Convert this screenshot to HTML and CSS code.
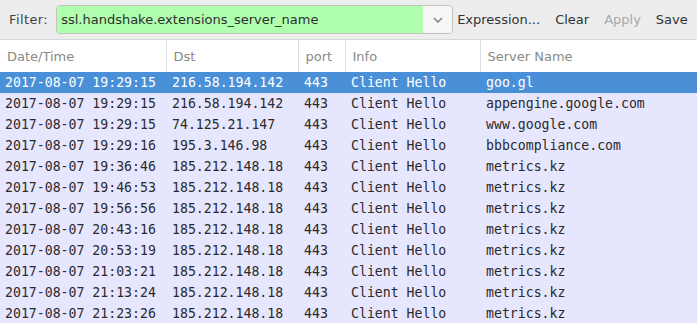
FILE: index.html
```html
<!DOCTYPE html>
<html lang="en">
<head>
  <meta charset="UTF-8" />
  <title>Packet List</title>
  <link rel="stylesheet" href="styles.css">
</head>
<body>

<div class="toolbar">
  <span class="filter-label">Filter:</span>
  <div class="filter-box">
    <div class="filter-input">ssl.handshake.extensions_server_name</div>
    <div class="filter-drop">
      <svg width="10" height="6" viewBox="0 0 10 6"><path d="M1 1 L5 5 L9 1" fill="none" stroke="#777" stroke-width="1.3"/></svg>
    </div>
  </div>
  <span class="tool-btn">Expression...</span>
  <span class="tool-btn">Clear</span>
  <span class="tool-btn disabled">Apply</span>
  <span class="tool-btn">Save</span>
</div>

<table class="packets">
  <colgroup>
    <col class="c-time">
    <col class="c-dst">
    <col class="c-port">
    <col class="c-info">
    <col>
  </colgroup>
  <thead>
    <tr>
      <th>Date/Time</th>
      <th>Dst</th>
      <th>port</th>
      <th>Info</th>
      <th>Server Name</th>
    </tr>
  </thead>
  <tbody>
    <tr class="selected"><td>2017-08-07 19:29:15</td><td>216.58.194.142</td><td>443</td><td>Client Hello</td><td>goo.gl</td></tr>
    <tr><td>2017-08-07 19:29:15</td><td>216.58.194.142</td><td>443</td><td>Client Hello</td><td>appengine.google.com</td></tr>
    <tr><td>2017-08-07 19:29:15</td><td>74.125.21.147</td><td>443</td><td>Client Hello</td><td>www.google.com</td></tr>
    <tr><td>2017-08-07 19:29:16</td><td>195.3.146.98</td><td>443</td><td>Client Hello</td><td>bbbcompliance.com</td></tr>
    <tr><td>2017-08-07 19:36:46</td><td>185.212.148.18</td><td>443</td><td>Client Hello</td><td>metrics.kz</td></tr>
    <tr><td>2017-08-07 19:46:53</td><td>185.212.148.18</td><td>443</td><td>Client Hello</td><td>metrics.kz</td></tr>
    <tr><td>2017-08-07 19:56:56</td><td>185.212.148.18</td><td>443</td><td>Client Hello</td><td>metrics.kz</td></tr>
    <tr><td>2017-08-07 20:43:16</td><td>185.212.148.18</td><td>443</td><td>Client Hello</td><td>metrics.kz</td></tr>
    <tr><td>2017-08-07 20:53:19</td><td>185.212.148.18</td><td>443</td><td>Client Hello</td><td>metrics.kz</td></tr>
    <tr><td>2017-08-07 21:03:21</td><td>185.212.148.18</td><td>443</td><td>Client Hello</td><td>metrics.kz</td></tr>
    <tr><td>2017-08-07 21:13:24</td><td>185.212.148.18</td><td>443</td><td>Client Hello</td><td>metrics.kz</td></tr>
    <tr><td>2017-08-07 21:23:26</td><td>185.212.148.18</td><td>443</td><td>Client Hello</td><td>metrics.kz</td></tr>
  </tbody>
</table>

</body>
</html>
```

FILE: styles.css
```css
html, body {
  margin: 0;
  padding: 0;
}

body {
  font-family: "DejaVu Sans", sans-serif;
  font-size: 13px;
  color: #2e3436;
  background: #e7e6ff;
  overflow: hidden;
}

.toolbar {
  display: flex;
  align-items: center;
  height: 40px;
  background: #ededed;
  border-bottom: 1px solid #d8d8d8;
  box-sizing: border-box;
}

.filter-label {
  margin-left: 9px;
  margin-right: 8px;
  letter-spacing: 0.4px;
  color: #444;
}

.filter-box {
  display: flex;
  width: 397px;
  height: 29px;
  border: 1px solid #c3c3c3;
  border-radius: 4px;
  overflow: hidden;
  box-sizing: border-box;
}

.filter-input {
  flex: 1;
  background: #afffaf;
  padding-left: 4px;
  line-height: 27px;
  color: #2e2e2e;
}

.filter-drop {
  width: 29px;
  background: #f6f6f6;
  display: flex;
  align-items: center;
  justify-content: center;
}

.tool-btn {
  margin-left: 0;
  padding: 0 4px;
  color: #2e3436;
}

.tool-btn + .tool-btn {
  margin-left: 7px;
}

.tool-btn.disabled {
  color: #a8a8a8;
}

.packets {
  width: 100%;
  border-collapse: collapse;
  table-layout: fixed;
}

.c-time { width: 166px; }
.c-dst { width: 132px; }
.c-port { width: 47px; }
.c-info { width: 135px; }

.packets th {
  background: #fff;
  height: 32px;
  padding: 0 0 0 7px;
  text-align: left;
  font-weight: normal;
  color: #888a85;
  border-left: 1px solid #dcdcdc;
}

.packets th:first-child {
  border-left: none;
}

.packets td {
  font-family: "DejaVu Sans Mono", monospace;
  font-size: 13.2px;
  height: 21px;
  padding: 0 0 0 6px;
  white-space: nowrap;
  overflow: hidden;
  color: #2b2b2b;
}

.packets td:first-child {
  padding-left: 5px;
}

.packets tr.selected td {
  background: #4a90d9;
  color: #fff;
}
```
